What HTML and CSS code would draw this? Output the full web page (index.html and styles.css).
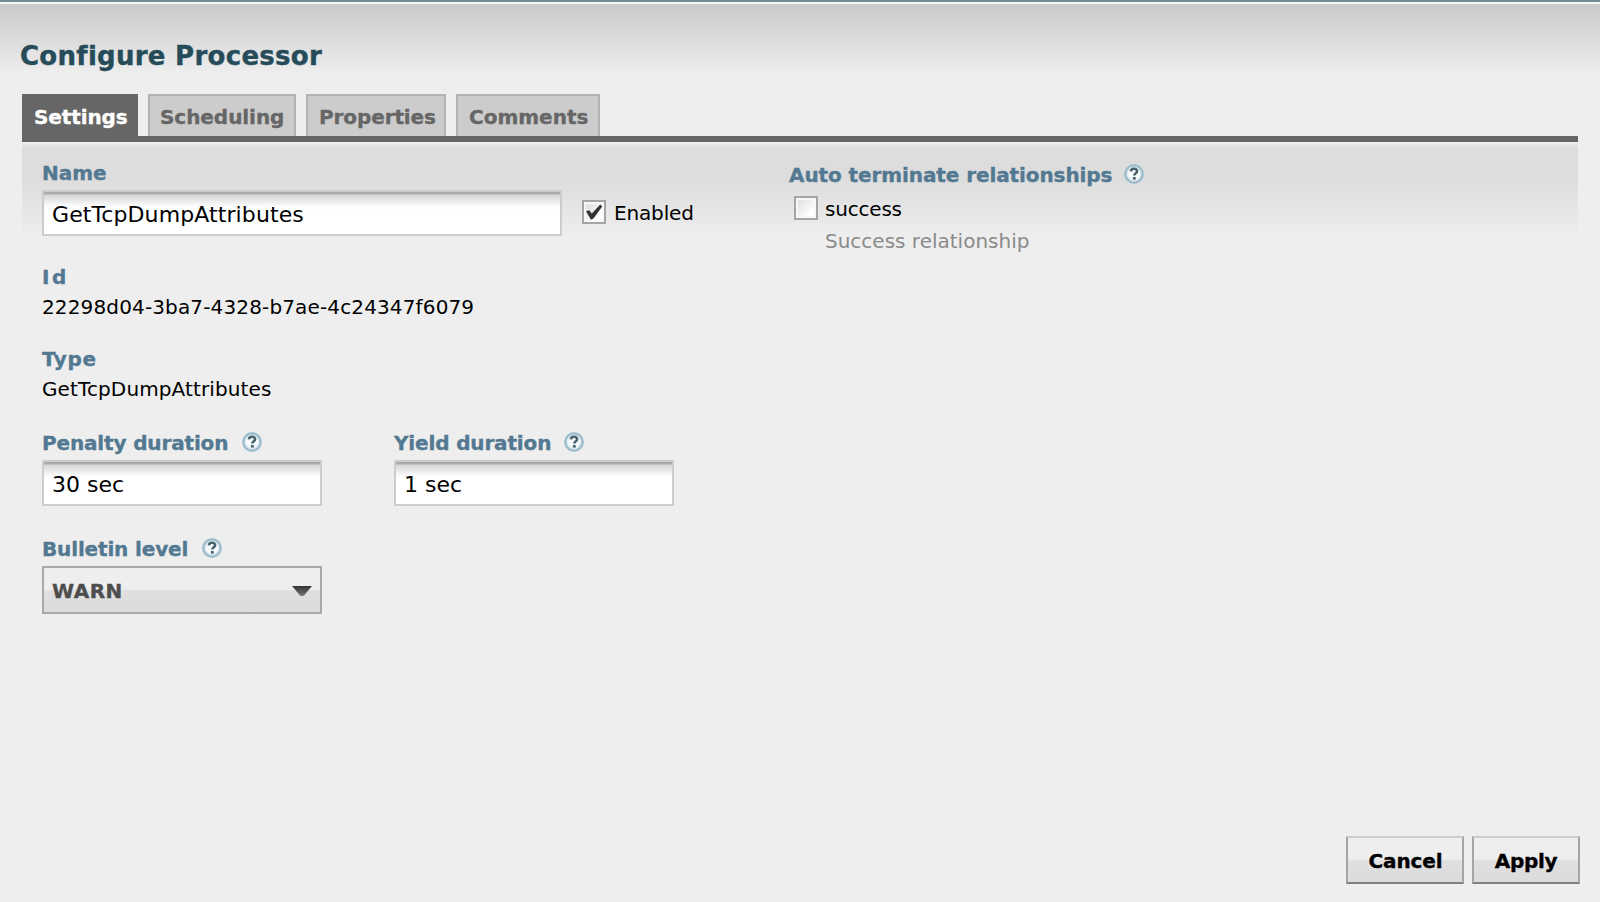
FILE: index.html
```html
<!DOCTYPE html>
<html lang="en">
<head>
<meta charset="utf-8">
<title>Configure Processor</title>
<link rel="stylesheet" href="styles.css">
</head>
<body>
<svg class="defs" width="0" height="0" aria-hidden="true">
  <defs>
    <radialGradient id="ring">
      <stop offset="0.5" stop-color="#f6fafb"/>
      <stop offset="0.66" stop-color="#dfebf0"/>
      <stop offset="0.84" stop-color="#94b6c7"/>
      <stop offset="1" stop-color="#adc8d5"/>
    </radialGradient>
    <linearGradient id="shade" x1="0" y1="0" x2="0" y2="1">
      <stop offset="0" stop-color="#333"/>
      <stop offset="1" stop-color="#777"/>
    </linearGradient>
    <symbol id="help" viewBox="0 0 20 20">
      <circle cx="10" cy="10" r="10" fill="url(#ring)"/>
      <path d="M6.900 7.300C7.100 5.400 8.300 4.800 10 4.800c1.900 0 3.100.9 3.100 2.300 0 1.200-.7 1.800-1.600 2.400-.9.6-1.200 1-1.200 2.100" fill="none" stroke="#46616b" stroke-width="2.600"/>
      <rect x="8.900" y="13" width="2.800" height="2.600" fill="#46616b"/>
    </symbol>
  </defs>
</svg>
<div class="dialog">
  <h1 class="title">Configure Processor</h1>
  <nav class="tabs">
    <div class="tab tab-active">Settings</div>
    <div class="tab tab-scheduling">Scheduling</div>
    <div class="tab tab-properties">Properties</div>
    <div class="tab tab-comments">Comments</div>
  </nav>
  <main class="panel">
    <section class="left">
      <div class="label">Name</div>
      <div class="name-row">
        <div class="input input-wide">GetTcpDumpAttributes</div>
        <div class="checkbox"><svg width="20" height="20" viewBox="0 0 20 20"><path d="M2 9.300 5.300 8.300 7.800 11.500 16.300 2.500 18.200 4.500 9.500 16.500 7 17.800Z" fill="#333"/></svg></div>
        <span class="enabled">Enabled</span>
      </div>
      <div class="label label-id">Id</div>
      <div class="value value-id">22298d04-3ba7-4328-b7ae-4c24347f6079</div>
      <div class="label label-type">Type</div>
      <div class="value value-type">GetTcpDumpAttributes</div>
      <div class="durations">
        <div class="field">
          <div class="label label-penalty">Penalty duration<svg class="help" width="20" height="20"><use href="#help"/></svg></div>
          <div class="input">30 sec</div>
        </div>
        <div class="field">
          <div class="label label-yield">Yield duration<svg class="help" width="20" height="20"><use href="#help"/></svg></div>
          <div class="input">1 sec</div>
        </div>
      </div>
      <div class="label label-bulletin">Bulletin level<svg class="help" width="20" height="20"><use href="#help"/></svg></div>
      <div class="select"><span>WARN</span><svg class="arrow" width="20" height="10" viewBox="0 0 20 10"><path d="M0 0H20L12 9.500Q10 10.500 8 9.500Z" fill="url(#shade)"/></svg></div>
    </section>
    <section class="right">
      <div class="label label-auto">Auto terminate relationships<svg class="help" width="20" height="20"><use href="#help"/></svg></div>
      <div class="relationship">
        <div class="checkbox"></div>
        <div>
          <div class="rel-name">success</div>
          <div class="rel-text">Success relationship</div>
        </div>
      </div>
    </section>
  </main>
  <footer class="buttons">
    <div class="button button-cancel">Cancel</div>
    <div class="button button-apply">Apply</div>
  </footer>
</div>
</body>
</html>
```
FILE: styles.css
```css
* { box-sizing: border-box; }
body {
  margin: 0;
  background: #eee;
  font: 20px/24px Verdana, "DejaVu Sans", sans-serif;
  color: #000;
  overflow: hidden;
}
.defs { position: absolute; }
.dialog {
  display: flex;
  flex-direction: column;
  height: 902px;
  padding: 38px 20px 18px 22px;
  border-top: 2px solid #728a91;
  background: linear-gradient(#f4f4f4 0 2px, #c9c9c9 2px, #eee 72px);
}
.title {
  margin: 1px 0 23px -2px;
  font-size: 26px;
  line-height: 30px;
  letter-spacing: .28px;
  color: #264c5a;
}
.title, .tab, .label, .select, .button { -webkit-text-stroke-width: .35px; }
.tabs {
  display: flex;
  gap: 10px;
  height: 48px;
  margin-right: 2px;
  border-bottom: 6px solid #666;
}
.tab {
  border: 2px solid #b3b3b3;
  border-bottom: 0;
  padding: 9px 0 0 10px;
  background: #ccc;
  color: #666;
  font-weight: bold;
}
.tab-active { width: 116px; background: #666; border-color: #666; color: #fff; letter-spacing: -.1px; }
.tab-scheduling { width: 148px; letter-spacing: -.05px; }
.tab-properties { width: 140px; padding-left: 11px; letter-spacing: -.1px; }
.tab-comments { width: 144px; padding-left: 11px; }
.panel {
  display: flex;
  flex: 1;
  margin-right: 2px;
  padding: 19px 20px 0;
  background: linear-gradient(#f2f2f2 0 1px, #e8e8e8 2px, #ddd 6px, #ddd 36px, #eee 96px);
}
.left { width: 747px; }
.label {
  display: flex;
  height: 24px;
  color: #527991;
  font-weight: bold;
}
.help { position: relative; top: 1px; }
.name-row { display: flex; margin-top: 5px; }
.input {
  width: 280px;
  height: 46px;
  padding: 10px 0 0 8px;
  border: 2px solid #ccc;
  background: linear-gradient(#aaa 0 2px, #d8d8d8 3px, #e3e3e3 7px, #fcfcfc 14px, #fff 18px);
  font-size: 22px;
  line-height: 25px;
}
.input-wide { width: 520px; letter-spacing: .1px; }
.checkbox {
  width: 24px;
  height: 24px;
  border: 2px solid #a5a5a5;
  background: linear-gradient(135deg, #d9d9d9, #fff 75%);
  box-shadow: inset 0 0 1px 2px #f8f8f8;
}
.name-row .checkbox { margin: 10px 0 0 20px; }
.checkbox svg { display: block; }
.enabled { margin: 11px 0 0 8px; letter-spacing: -.15px; }
.label-id { margin-top: 29px; letter-spacing: 2.5px; }
.value { margin-top: 6px; }
.value-id { letter-spacing: .14px; }
.label-type { margin-top: 28px; letter-spacing: .6px; }
.value-type { letter-spacing: .12px; }
.durations { display: flex; gap: 72px; margin-top: 30px; }
.durations .input { margin-top: 5px; }
.label-penalty { letter-spacing: -.15px; }
.label-penalty .help { margin-left: 14px; }
.label-yield { letter-spacing: -.15px; }
.label-yield .help { margin-left: 13px; }
.label-bulletin { margin-top: 31px; letter-spacing: -.15px; }
.label-bulletin .help { margin-left: 14px; }
.select {
  display: flex;
  justify-content: space-between;
  width: 280px;
  height: 48px;
  margin-top: 5px;
  padding: 11px 8px 0 8px;
  border: 2px solid #a9a9a9;
  background: linear-gradient(#eee 0 21px, #e0e0e0 23px, #dbdbdb);
  color: #4d4d4d;
  font-weight: bold;
  letter-spacing: .5px;
}
.arrow { margin-top: 7px; }
.right { padding-top: 2px; }
.label-auto { letter-spacing: -.09px; }
.label-auto .help { margin-left: 12px; }
.relationship { display: flex; gap: 7px; margin: 9px 0 0 5px; }
.rel-name { margin-top: 1px; letter-spacing: -.2px; }
.rel-text { margin-top: 8px; color: #8a8a8a; }
.buttons { display: flex; justify-content: flex-end; gap: 8px; }
.button {
  height: 48px;
  padding-top: 11px;
  border: 2px solid #a5a5a5;
  border-top-color: #ccc;
  border-bottom-color: #808080;
  background: linear-gradient(#eee 0 21px, #e0e0e0 23px, #dbdbdb);
  font-weight: bold;
  text-align: center;
}
.button-cancel { width: 118px; padding-left: 1px; letter-spacing: -.15px; }
.button-apply { width: 108px; letter-spacing: -.3px; }
```
